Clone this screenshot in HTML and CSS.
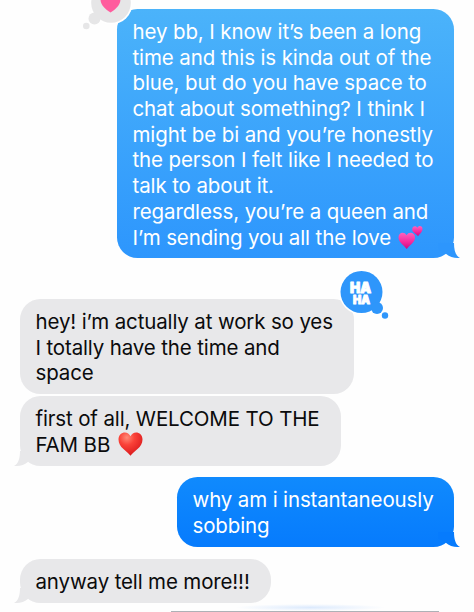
FILE: index.html
```html
<!DOCTYPE html>
<html lang="en">
<head>
<meta charset="utf-8">
<title>Messages</title>
<link rel="stylesheet" href="styles.css">
</head>
<body>
<main class="chat">
  <section class="bubble sent light first">
    <p class="line">hey bb, I know it’s been a long</p>
    <p class="line">time and this is kinda out of the</p>
    <p class="line">blue, but do you have space to</p>
    <p class="line">chat about something? I think I</p>
    <p class="line">might be bi and you’re honestly</p>
    <p class="line">the person I felt like I needed to</p>
    <p class="line">talk to about it.</p>
    <p class="line">regardless, you’re a queen and</p>
    <p class="line">I’m sending you all the love <svg class="hearts" viewBox="0 0 25 25"><defs><linearGradient id="pink" x1="0" y1="0" x2="0" y2="1"><stop offset="0" stop-color="#ff62bd"/><stop offset=".55" stop-color="#f72a9d"/><stop offset="1" stop-color="#c90d83"/></linearGradient></defs><path fill="url(#pink)" d="M8.7 24C6 20.300.5 17.500.5 12.500C.5 7 6.500 6.500 8.600 10.300C10.500 6.500 17 7 17 12.500C17 17.500 11.500 20.300 8.700 24Z"/><path fill="url(#pink)" d="M20 11.200C18 9 14.300 7.600 14.200 4.300C14.200.8 17.800.3 19.300 2.700C20.600.1 24.800.7 24.500 4.200C24.300 7.300 21.700 8.600 20 11.200Z"/></svg></p>
    <svg class="tail" viewBox="0 0 28 16"><path d="M6 0H22C22 7 23.500 13 28 14.900C22.500 15.500 17.500 14 13.500 10.500L6 6Z"/></svg>
    <svg class="love" viewBox="0 0 52 32"><circle cx="28" cy="3" r="21.500" fill="#fff"/><circle cx="28" cy="3" r="19.800"/><circle cx="11.500" cy="18.500" r="6"/><circle cx="3.300" cy="26" r="3.300"/><path fill="#ff5c9d" d="M27.500 12.500C22 9 17.500 5 17.500-1H37.500C37.500 5 33 9 27.500 12.500Z"/></svg>
  </section>

  <section class="bubble received second">
    <p class="line">hey! i’m actually at work so yes</p>
    <p class="line">I totally have the time and</p>
    <p class="line">space</p>
    <svg class="haha" viewBox="0 0 50 50"><circle cx="21.500" cy="21" r="22.500" fill="#fff"/><circle cx="21.500" cy="21" r="21"/><circle cx="37" cy="37" r="6"/><circle cx="45" cy="44.500" r="3.200"/><text x="20.500" y="22" textLength="21" lengthAdjust="spacingAndGlyphs" font-size="14">HA</text><text x="21.500" y="33" textLength="17" lengthAdjust="spacingAndGlyphs" font-size="11.500">HA</text></svg>
  </section>

  <section class="bubble received third">
    <p class="line">first of all, WELCOME TO THE</p>
    <p class="line">FAM BB <svg class="red-heart" viewBox="0 0 25 24"><defs><radialGradient id="red" cx=".35" cy=".22" r=".8"><stop offset="0" stop-color="#ff8a78"/><stop offset=".4" stop-color="#fa4238"/><stop offset="1" stop-color="#d9181c"/></radialGradient></defs><path fill="url(#red)" d="M12.500 23.700C9 19 .5 15.500.5 7.500C.5-.5 10-2 12.500 4.300C15-2 24.500-.5 24.500 7.500C24.500 15.500 16 19 12.500 23.700Z"/></svg></p>
    <svg class="tail" viewBox="0 0 28 16"><path d="M6 0H22C22 7 23.500 13 28 14.900C22.500 15.500 17.500 14 13.500 10.500L6 6Z"/></svg>
  </section>

  <section class="bubble sent deep fourth">
    <p class="line">why am i instantaneously</p>
    <p class="line">sobbing</p>
    <svg class="tail" viewBox="0 0 28 16"><path d="M6 0H22C22 7 23.500 13 28 14.900C22.500 15.500 17.500 14 13.500 10.500L6 6Z"/></svg>
  </section>

  <section class="bubble received fifth">
    <p class="line">anyway tell me more!!!</p>
    <svg class="tail" viewBox="0 0 28 16"><path d="M6 0H22C22 7 23.500 13 28 14.900C22.500 15.500 17.500 14 13.500 10.500L6 6Z"/></svg>
  </section>
  <div class="glow"></div>
  <div class="next"></div>
</main>
</body>
</html>
```
FILE: styles.css
```css
* { box-sizing: border-box; }
body { margin: 0; background: #fefefe; }
.chat {
  width: 474px;
  height: 612px;
  padding: 9px 20px 0;
  overflow: hidden;
  display: flex;
  flex-direction: column;
  font: 20.5px/25.7px Inter, "Liberation Sans", sans-serif;
  letter-spacing: -0.14px;
}
.bubble {
  position: relative;
  flex: none;
  padding: 10px 15.500px 8.300px;
  border-radius: 20.500px;
}
.line { margin: 0; height: 25.700px; white-space: nowrap; }
.sent { align-self: flex-end; color: #fff; }
.received { align-self: flex-start; background: #e8e8ea; color: #0b0b0c; fill: #e8e8ea; }
.light { background: linear-gradient(#4bb3fa, #2d96fd); fill: #2d96fd; }
.deep { background: linear-gradient(#108afd, #067bfd); fill: #067bfd; }
.first { width: 337px; height: 249px; letter-spacing: -0.12px; }
.second { width: 334px; height: 95px; margin-top: 41px; }
.third { width: 321px; height: 70px; margin-top: 2px; }
.fourth { width: 277px; height: 70px; margin-top: 11px; }
.fifth { width: 251px; height: 44px; margin-top: 12px; }
.tail {
  position: absolute;
  right: -6px;
  bottom: -1px;
  width: 28px;
  height: 16px;
}
.received .tail { right: auto; left: -6px; transform: scaleX(-1); }
.hearts { width: 25px; height: 25px; margin-left: 1px; vertical-align: -5px; }
.red-heart { width: 25px; height: 24px; margin-left: 2px; vertical-align: -4px; }
.love {
  position: absolute;
  left: -34px;
  top: -9px;
  width: 52px;
  height: 32px;
  fill: #e6e6e7;
  overflow: visible;
}
.haha {
  position: absolute;
  left: 320px;
  top: -28px;
  width: 50px;
  height: 50px;
  fill: #2e96fb;
  overflow: visible;
}
.haha text {
  fill: #fff;
  stroke: #fff;
  stroke-width: 1;
  stroke-linejoin: round;
  font-family: Inter, sans-serif;
  font-weight: 900;
  letter-spacing: 0;
  text-anchor: middle;
}
.glow {
  flex: none;
  width: 150px;
  height: 7px;
  margin: 1px 0 0 215px;
  background: radial-gradient(closest-side, #dceafd, transparent);
}
.next {
  flex: none;
  width: 268px;
  height: 1px;
  margin-left: 151px;
  background: #aeb1b6;
}
```
